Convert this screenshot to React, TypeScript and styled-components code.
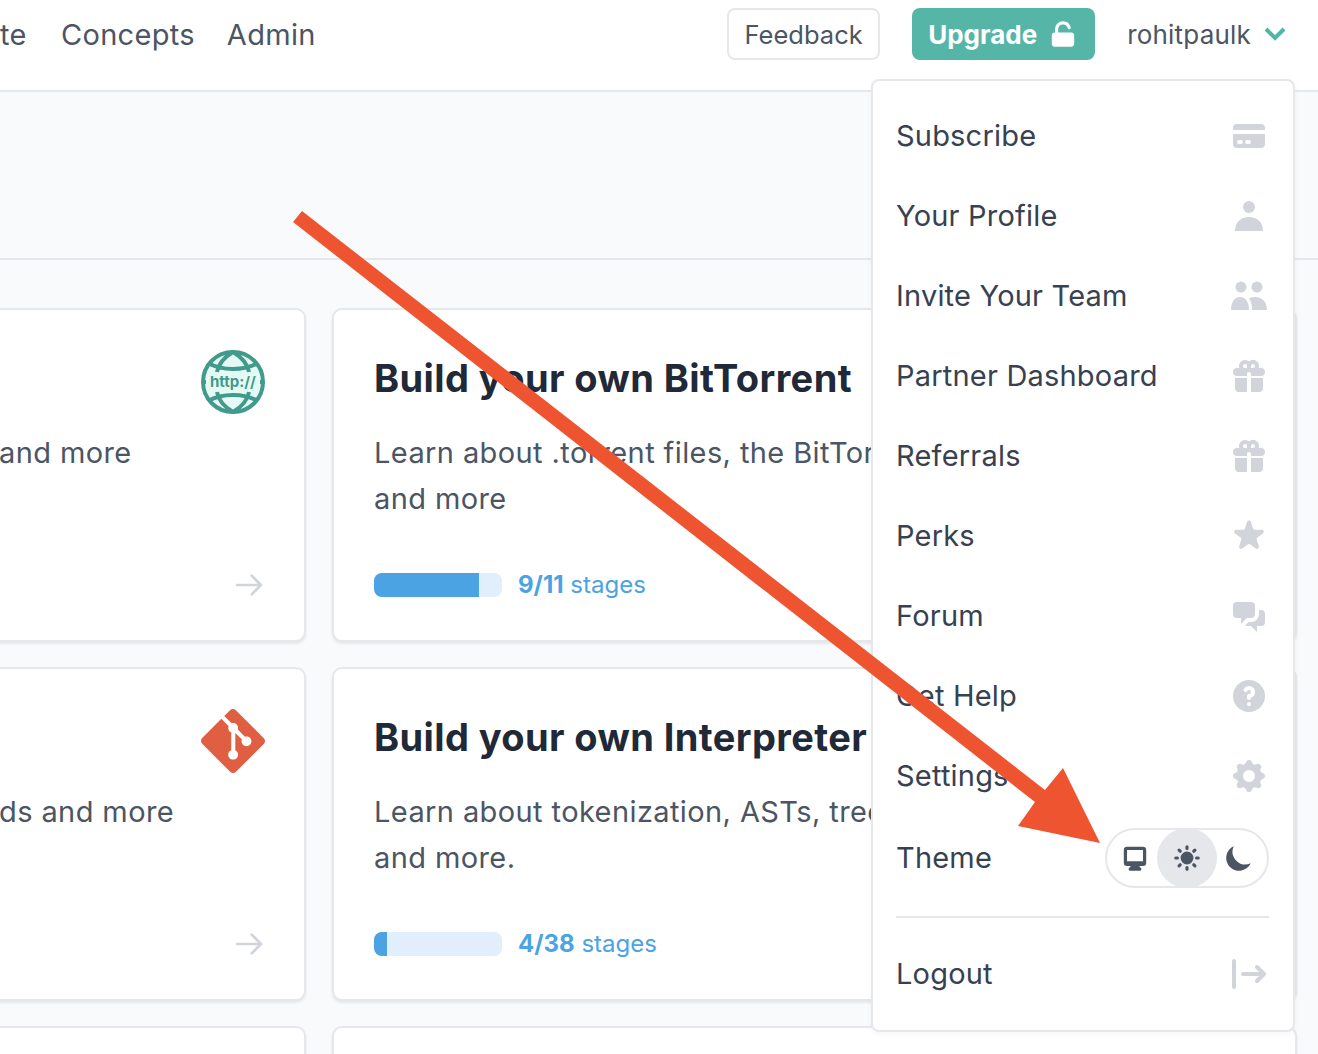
import React from "react";
import styled, { createGlobalStyle } from "styled-components";
import {
  HiCreditCard,
  HiGift,
  HiStar,
  HiChatAlt2,
  HiQuestionMarkCircle,
  HiCog,
  HiDesktopComputer,
  HiSun,
  HiMoon,
  HiLockOpen,
  HiOutlineArrowRight,
} from "react-icons/hi";
import { SiGit } from "react-icons/si";

const GlobalStyle = createGlobalStyle`
  html, body {
    margin: 0;
    padding: 0;
    background: #f9fafb;
  }
  body {
    font-family: Inter, "Noto Sans", "Liberation Sans", sans-serif;
    color: #374151;
  }
`;

const Page = styled.div`
  position: relative;
  width: 1318px;
  height: 1054px;
  overflow: hidden;
  background: #f9fafb;
`;

const Header = styled.header`
  display: flex;
  justify-content: space-between;
  align-items: center;
  height: 68px;
  padding: 0 32px 22px 0;
  background: #fff;
  border-bottom: 2px solid #e5e7eb;
`;

const Nav = styled.nav`
  display: flex;
  gap: 32px;
  font-size: 29px;
  letter-spacing: 0.3px;
  color: #4b5563;
  span:first-child {
    min-width: 29px;
  }
`;

const HeaderRight = styled.div`
  display: flex;
  align-items: center;
`;

const FeedbackButton = styled.button`
  width: 153px;
  height: 52px;
  box-sizing: border-box;
  margin-right: 32px;
  border: 2px solid #e5e7eb;
  border-radius: 8px;
  background: #fff;
  color: #4b5563;
  font: inherit;
  font-size: 25.5px;
`;

const UpgradeButton = styled.button`
  display: flex;
  align-items: center;
  justify-content: center;
  gap: 10px;
  width: 183px;
  height: 52px;
  margin-right: 32px;
  border: none;
  border-radius: 8px;
  background: #55b5a6;
  color: #fff;
  font: inherit;
  font-size: 26px;
  font-weight: 700;
`;

const UserName = styled.span`
  font-size: 26px;
  letter-spacing: 0.2px;
  color: #4b5563;
`;

const Chevron = styled.svg`
  width: 22px;
  height: 14px;
  margin-left: 13px;
  fill: none;
  stroke: #4db6a4;
  stroke-width: 4;
`;

const Hero = styled.div`
  height: 166px;
  border-bottom: 2px solid #e5e7eb;
`;

const Grid = styled.div`
  display: grid;
  grid-template-columns: 349px 965px;
  grid-auto-rows: 334px;
  gap: 25px 26px;
  margin: 48px 0 0 -43px;
`;

const Card = styled.article`
  box-sizing: border-box;
  padding: 40px 39px 0 40px;
  background: #fff;
  border: 2px solid #e5e7eb;
  border-radius: 10px;
  box-shadow: 0 2px 3px rgba(0, 0, 0, 0.08);
`;

const CardTop = styled.div`
  display: flex;
  justify-content: flex-end;
  height: 64px;
`;

const CardTitle = styled.h3`
  margin: 3px 0 0;
  font-size: 38px;
  line-height: 50px;
  font-weight: 700;
  letter-spacing: 0.4px;
  color: #1f2937;
  white-space: nowrap;
`;

const Desc = styled.p<{ $offset?: number }>`
  margin: ${(p) => p.$offset ?? 27}px 0 0;
  font-size: 29px;
  line-height: 46px;
  letter-spacing: 0.4px;
  color: #4b5563;
  white-space: nowrap;
`;

const ProgressRow = styled.div`
  display: flex;
  align-items: center;
  gap: 16px;
  margin-top: 48px;
`;

const Track = styled.div`
  width: 128px;
  height: 24px;
  border-radius: 8px;
  overflow: hidden;
  background: #e0effb;
`;

const Fill = styled.div`
  height: 100%;
  background: #4ba3e3;
`;

const Stages = styled.span`
  font-size: 24px;
  color: #4ba3e3;
  b {
    font-weight: 700;
  }
`;

const CardArrow = styled.div`
  display: flex;
  justify-content: flex-end;
  margin-top: 93px;
  color: #d1d5db;
  font-size: 32px;
`;

const Menu = styled.div`
  position: absolute;
  top: 79px;
  left: 871px;
  width: 424px;
  height: 953px;
  box-sizing: border-box;
  padding: 15px 24px 0 23px;
  background: #fff;
  border: 2px solid #e5e7eb;
  border-radius: 8px;
  box-shadow: 0 2px 6px rgba(0, 0, 0, 0.04);
`;

const MenuRow = styled.div<{ $height?: number }>`
  display: flex;
  align-items: center;
  justify-content: space-between;
  height: ${(p) => p.$height ?? 80}px;
  font-size: 29px;
  letter-spacing: 0.2px;
  color: #374151;
`;

const MenuLabel = styled.span`
  margin-bottom: 2px;
`;

const MenuIcon = styled.span`
  display: flex;
  align-items: center;
  justify-content: center;
  width: 40px;
  height: 40px;
  color: #d1d5db;
  font-size: 40px;
`;

const ThemeRow = styled(MenuRow)`
  height: 60px;
  margin-top: 12px;
`;

const Toggle = styled.div`
  display: flex;
  align-items: center;
  box-sizing: border-box;
  width: 164px;
  height: 60px;
  padding: 0 6px;
  border: 2px solid #e5e7eb;
  border-radius: 30px;
`;

const ToggleCell = styled.span<{ $active?: boolean }>`
  display: flex;
  flex-shrink: 0;
  align-items: center;
  justify-content: center;
  width: ${(p) => (p.$active ? 60 : 44)}px;
  height: 60px;
  border-radius: 50%;
  background: ${(p) => (p.$active ? "#e5e7eb" : "transparent")};
  color: #4b5563;
  font-size: 32px;
`;

const Divider = styled.hr`
  margin: 28px 0 0;
  border: none;
  border-top: 2px solid #e5e7eb;
`;

const ArrowOverlay = styled.svg`
  position: absolute;
  top: 0;
  left: 0;
  width: 1318px;
  height: 1054px;
  pointer-events: none;
`;

const UserIcon = () => (
  <svg width="30" height="32" viewBox="0 0 30 32" fill="currentColor">
    <circle cx="15" cy="7" r="6" />
    <path d="M1 31c0-9 6-14 14-14s14 5 14 14H1z" />
  </svg>
);

const TeamIcon = () => (
  <svg width="36" height="30" viewBox="0 0 36 30" fill="currentColor">
    <circle cx="10" cy="6" r="5.5" />
    <circle cx="26" cy="6" r="5.5" />
    <path d="M0 29c0-9 4-13 9-13s9 4 9 13H0z" />
    <path d="M21 29c0-5-.8-8.500-3-11.500 2-1.200 4-1.500 6-1.500 7 0 12 5 12 13H21z" />
  </svg>
);

const LogoutIcon = () => (
  <svg width="34" height="30" viewBox="0 0 34 30" fill="none" stroke="currentColor" strokeWidth="4" strokeLinecap="round" strokeLinejoin="round">
    <path d="M2 2v26" />
    <path d="M11 15h21M25 8l7 7-7 7" />
  </svg>
);

const GlobeIcon = () => (
  <svg width="64" height="64" viewBox="0 0 64 64" fill="none" stroke="#419a8a" strokeWidth="4">
    <circle cx="32" cy="32" r="30" fill="#e6faf5" />
    <path d="M7 13c14 8 36 8 50 0M7 51c14-8 36-8 50 0" />
    <path d="M32 2C22 8 17 16 16 22M32 2c10 6 15 14 16 20M32 62C22 56 17 48 16 42M32 62c10-6 15-14 16-20" />
    <path d="M1 32h4M59 32h4" />
    <text x="32" y="37" textAnchor="middle" fontSize="15" fontWeight="700" fill="#419a8a" stroke="none" fontFamily="Inter, sans-serif">http://</text>
  </svg>
);

const menuItems: [string, React.ReactNode][] = [
  ["Subscribe", <HiCreditCard key="a" />],
  ["Your Profile", <UserIcon key="b" />],
  ["Invite Your Team", <TeamIcon key="c" />],
  ["Partner Dashboard", <HiGift key="d" />],
  ["Referrals", <HiGift key="e" />],
  ["Perks", <HiStar key="f" />],
  ["Forum", <HiChatAlt2 key="g" />],
  ["Get Help", <HiQuestionMarkCircle key="h" />],
  ["Settings", <HiCog key="i" />],
];

const App = () => {
  return (
    <Page>
      <GlobalStyle />
      <Header>
        <Nav>
          <span>te</span>
          <span>Concepts</span>
          <span>Admin</span>
        </Nav>
        <HeaderRight>
          <FeedbackButton>Feedback</FeedbackButton>
          <UpgradeButton>
            Upgrade <HiLockOpen size={32} />
          </UpgradeButton>
          <UserName>rohitpaulk</UserName>
          <Chevron viewBox="0 0 22 14">
            <path d="M2 2l9 9 9-9" />
          </Chevron>
        </HeaderRight>
      </Header>
      <Hero />
      <Grid>
        <Card>
          <CardTop>
            <GlobeIcon />
          </CardTop>
          <Desc $offset={16}>and more</Desc>
          <CardArrow>
            <HiOutlineArrowRight />
          </CardArrow>
        </Card>
        <Card>
          <CardTitle>Build your own BitTorrent</CardTitle>
          <Desc>
            Learn about .torrent files, the BitTorrent protocol
            <br />
            and more
          </Desc>
          <ProgressRow>
            <Track>
              <Fill style={{ width: `${(9 / 11) * 100}%` }} />
            </Track>
            <Stages>
              <b>9/11</b> stages
            </Stages>
          </ProgressRow>
        </Card>
        <Card>
          <CardTop>
            <SiGit size={64} color="#e05f42" />
          </CardTop>
          <Desc $offset={16}>ds and more</Desc>
          <CardArrow>
            <HiOutlineArrowRight />
          </CardArrow>
        </Card>
        <Card>
          <CardTitle>Build your own Interpreter</CardTitle>
          <Desc>
            Learn about tokenization, ASTs, tree-walk interpreters
            <br />
            and more.
          </Desc>
          <ProgressRow>
            <Track>
              <Fill style={{ width: `${(4 / 38) * 100}%` }} />
            </Track>
            <Stages>
              <b>4/38</b> stages
            </Stages>
          </ProgressRow>
        </Card>
        <Card />
        <Card />
      </Grid>
      <Menu>
        {menuItems.map(([label, icon]) => (
          <MenuRow key={label}>
            <MenuLabel>{label}</MenuLabel>
            <MenuIcon>{icon}</MenuIcon>
          </MenuRow>
        ))}
        <ThemeRow>
          <MenuLabel>Theme</MenuLabel>
          <Toggle>
            <ToggleCell>
              <HiDesktopComputer />
            </ToggleCell>
            <ToggleCell $active>
              <HiSun />
            </ToggleCell>
            <ToggleCell>
              <HiMoon />
            </ToggleCell>
          </Toggle>
        </ThemeRow>
        <Divider />
        <MenuRow $height={112}>
          <MenuLabel>Logout</MenuLabel>
          <MenuIcon>
            <LogoutIcon />
          </MenuIcon>
        </MenuRow>
      </Menu>
      <ArrowOverlay viewBox="0 0 1318 1054">
        <polygon points="302,211 1045,790 1063,768 1100,843 1018,826 1035,802 293,222" fill="#ee5430" />
      </ArrowOverlay>
    </Page>
  );
};

export default App;
